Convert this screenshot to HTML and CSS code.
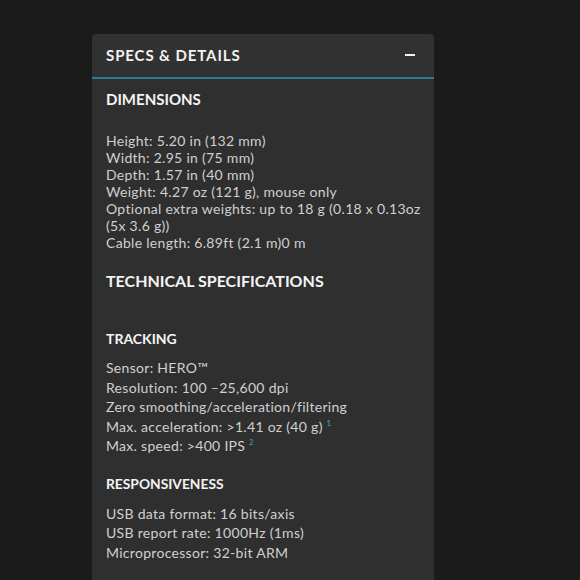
FILE: index.html
```html
<!DOCTYPE html>
<html>
<head>
<meta charset="utf-8">
<link rel="stylesheet" href="styles.css">
</head>
<body>
<section class="card">
  <header class="card-head">
    <h2 class="card-title">SPECS &amp; DETAILS</h2>
    <span class="toggle"></span>
  </header>
  <div class="card-body">
    <h3 class="group-title">DIMENSIONS</h3>
    <ul class="spec-list dense">
      <li>Height: 5.20 in (132 mm)</li>
      <li>Width: 2.95 in (75 mm)</li>
      <li>Depth: 1.57 in (40 mm)</li>
      <li>Weight: 4.27 oz (121 g), mouse only</li>
      <li>Optional extra weights: up to 18 g (0.18 x 0.13oz (5x 3.6 g))</li>
      <li>Cable length: 6.89ft (2.1 m)0 m</li>
    </ul>
    <h3 class="section-title">TECHNICAL SPECIFICATIONS</h3>
    <h4 class="sub-title">TRACKING</h4>
    <ul class="spec-list">
      <li>Sensor: HERO™</li>
      <li>Resolution: 100 –25,600 dpi</li>
      <li>Zero smoothing/acceleration/filtering</li>
      <li>Max. acceleration: &gt;1.41 oz (40 g) <sup class="note">1</sup></li>
      <li>Max. speed: &gt;400 IPS <sup class="note">2</sup></li>
    </ul>
    <h4 class="sub-title resp">RESPONSIVENESS</h4>
    <ul class="spec-list">
      <li>USB data format: 16 bits/axis</li>
      <li>USB report rate: 1000Hz (1ms)</li>
      <li>Microprocessor: 32-bit ARM</li>
    </ul>
  </div>
</section>
</body>
</html>
```
FILE: styles.css
```css
html, body {
  margin: 0;
  padding: 0;
  background: #1b1b1b;
  height: 100%;
  overflow: hidden;
}
body {
  font-family: "Lato", "Liberation Sans", sans-serif;
  color: #d6d6d6;
}
.card {
  margin: 34px 0 0 92px;
  width: 342px;
  background: #2f2f2f;
  border-radius: 4px 4px 0 0;
  min-height: 600px;
}
.card-head {
  height: 43px;
  display: flex;
  align-items: center;
  justify-content: space-between;
  padding: 0 19px 0 14px;
  border-bottom: 2px solid #2e7b98;
  background: #313131;
  border-radius: 4px 4px 0 0;
}
.card-title {
  margin: 0 0 2px;
  font-size: 15px;
  font-weight: 700;
  letter-spacing: 0.9px;
  color: #f2f2f2;
}
.toggle {
  width: 10px;
  height: 2px;
  background: #f2f2f2;
  margin-bottom: 2px;
}
.card-body {
  padding: 10px 14px 0 14px;
}
.group-title {
  margin: 0;
  font-size: 15px;
  font-weight: 700;
  color: #f4f4f4;
  line-height: 20px;
}
.spec-list {
  list-style: none;
  margin: 0;
  padding: 0;
  font-size: 14px;
  line-height: 19.5px;
  letter-spacing: 0.3px;
  color: #d0d0d0;
}
.spec-list.dense {
  margin-top: 23px;
  line-height: 17px;
  margin-right: -8px;
}
.section-title {
  margin: 20px 0 0;
  font-size: 16px;
  font-weight: 700;
  color: #f4f4f4;
  line-height: 20px;
}
.sub-title {
  margin: 39px 0 10px;
  font-size: 14px;
  font-weight: 700;
  color: #f4f4f4;
  line-height: 18px;
}
.sub-title.resp {
  margin-top: 19px;
  margin-bottom: 11px;
  font-size: 13.8px;
}
.note {
  color: #3b8cab;
  font-size: 8px;
  font-weight: 700;
  vertical-align: 6px;
  line-height: 0;
}
```
